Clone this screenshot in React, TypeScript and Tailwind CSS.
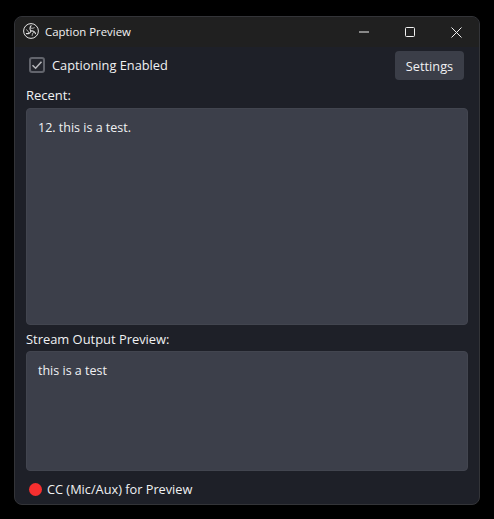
export default function App() {
  const blade = "M8 8C6.6 6.7 6.5 4.2 8.4 2.4";
  const tail = "M7.2 4.6C8 5.5 9.6 5.6 11.6 4.6";
  return (
    <div className="h-[519px] w-[494px] overflow-hidden bg-black pl-[14px] pt-[16px] font-['Open_Sans','Noto_Sans',sans-serif] text-[12.8px] text-[#f0f1f3]">
      <div className="flex h-[489px] w-[466px] flex-col overflow-hidden rounded-[8px] border border-[#333438] bg-[#1e2028]">
        <div className="flex h-[30px] shrink-0 items-center bg-[#202020] pl-[8px]">
          <svg width="16" height="16" viewBox="0 0 16 16" fill="none" className="mb-[2px] shrink-0">
            <circle cx="8" cy="8" r="7.4" stroke="#e4e4e4" strokeWidth="1" />
            <g stroke="#e4e4e4" strokeWidth="1.1">
              <path d={blade} />
              <path d={tail} strokeWidth="0.7" />
              <g transform="rotate(120 8 8)">
                <path d={blade} />
                <path d={tail} strokeWidth="0.7" />
              </g>
              <g transform="rotate(240 8 8)">
                <path d={blade} />
                <path d={tail} strokeWidth="0.7" />
              </g>
            </g>
          </svg>
          <span className="ml-[6px] text-[11.4px] text-[#f2f2f2]">Caption Preview</span>
          <div className="ml-auto flex h-full items-center">
            <div className="flex h-full w-[46px] items-center justify-center">
              <svg width="10" height="10" viewBox="0 0 10 10"><path d="M0 5H10" stroke="#f0f0f0" strokeWidth="1" /></svg>
            </div>
            <div className="flex h-full w-[46px] items-center justify-center">
              <svg width="10" height="10" viewBox="0 0 10 10" fill="none"><rect x="0.5" y="0.5" width="9" height="9" rx="1" stroke="#f0f0f0" /></svg>
            </div>
            <div className="flex h-full w-[46px] items-center justify-center">
              <svg width="11" height="11" viewBox="0 0 11 11"><path d="M0.5 0.5L10.5 10.5M10.5 0.5L0.5 10.5" stroke="#f0f0f0" strokeWidth="1" /></svg>
            </div>
          </div>
        </div>
        <div className="flex min-h-0 flex-1 flex-col px-[11px]">
          <div className="mt-[3px] flex h-[30px] shrink-0 items-center">
            <div className="ml-[3px] flex h-[16px] w-[16px] items-center justify-center rounded-[3px] border-2 border-[#62646c] bg-[#23252d]">
              <svg width="12" height="12" viewBox="0 0 12 12" fill="none" className="shrink-0"><path d="M1.5 6.2L4.6 9.2L10.5 2.8" stroke="#b4b5b9" strokeWidth="1.6" /></svg>
            </div>
            <span className="ml-[7px] pt-[1px]">Captioning Enabled</span>
            <button className="ml-auto mr-[4px] flex h-[29px] w-[69px] items-center justify-center rounded-[4px] bg-[#3b3e48] pt-[3px] text-[12.75px] text-[#f0f1f3]">Settings</button>
          </div>
          <div className="mt-[4px] h-[24px] shrink-0 text-[13px] leading-[23px]">Recent:</div>
          <div className="h-[217px] w-[442px] shrink-0 rounded-[4px] border border-[#42454f] bg-[#3c3f4a] px-[11px] pt-[10px] text-[12.5px] leading-[18px]">12. this is a test.</div>
          <div className="h-[26px] shrink-0 pt-[5px] text-[12.9px] leading-[18px]">Stream Output Preview:</div>
          <div className="h-[120px] w-[442px] shrink-0 rounded-[4px] border border-[#42454f] bg-[#3c3f4a] px-[11px] pt-[10px] text-[12.5px] leading-[18px]">this is a test</div>
          <div className="flex flex-1 items-center pl-[3px] pt-[4px]">
            <div className="h-[13px] w-[13px] rounded-full bg-[#f62f2f]" />
            <span className="ml-[5px] text-[12.75px]">CC (Mic/Aux) for Preview</span>
          </div>
        </div>
      </div>
    </div>
  );
}
